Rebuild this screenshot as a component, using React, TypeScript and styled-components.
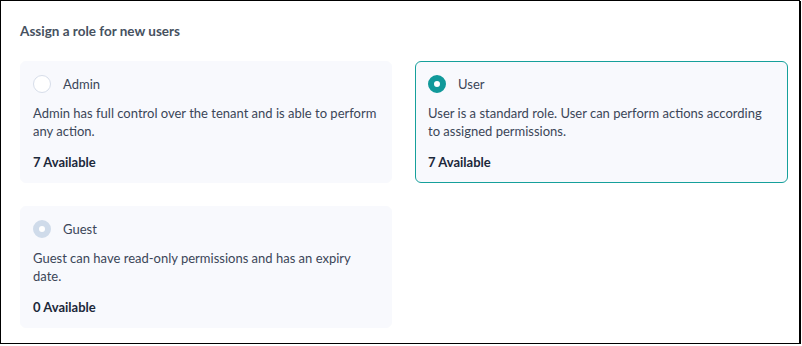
import React, { useState } from 'react';
import styled, { createGlobalStyle } from 'styled-components';

const GlobalStyle = createGlobalStyle`
  html, body {
    margin: 0;
    padding: 0;
    background: #fff;
  }
  body {
    font-family: Lato, "Noto Sans", sans-serif;
  }
`;

const Frame = styled.div`
  box-sizing: border-box;
  width: 800px;
  height: 344px;
  border: 1px solid #000;
  box-shadow: 1px 1px 0 #000;
  padding: 21px 13px 0 19px;
`;

const Heading = styled.div`
  font-size: 13.5px;
  font-weight: 700;
  color: #46515f;
  line-height: 18px;
  margin-bottom: 21px;
`;

const Grid = styled.div`
  display: grid;
  grid-template-columns: 372px 373px;
  column-gap: 23px;
  row-gap: 23px;
`;

const Card = styled.div<{ $selected: boolean }>`
  box-sizing: border-box;
  height: 122px;
  background: #f8f9fd;
  border: 1px solid ${p => (p.$selected ? '#16a09b' : '#f8f9fd')};
  border-radius: 6px;
  padding: 12px 12px 0 12px;
  cursor: pointer;
`;

const Header = styled.div`
  display: flex;
  align-items: center;
  gap: 12px;
  height: 20px;
  margin-bottom: 10px;
`;

const Radio = styled.span<{ $state: 'off' | 'on' | 'disabled' }>`
  box-sizing: border-box;
  width: 18px;
  height: 18px;
  border-radius: 50%;
  flex-shrink: 0;
  background: #fff;
  border: ${p =>
    p.$state === 'on'
      ? '6px solid #11999a'
      : p.$state === 'disabled'
      ? '6px solid #cfdbea'
      : '1px solid #d7deea'};
`;

const Label = styled.span`
  font-size: 13px;
  color: #3b4658;
`;

const Desc = styled.div`
  font-size: 13px;
  line-height: 18px;
  color: #3b4658;
  height: 36px;
  margin-bottom: 14px;
`;

const Count = styled.div`
  font-size: 13px;
  font-weight: 700;
  color: #1c283a;
`;

const roles = [
  { id: 'admin', name: 'Admin', desc: 'Admin has full control over the tenant and is able to perform any action.', count: 7, disabled: false },
  { id: 'user', name: 'User', desc: 'User is a standard role. User can perform actions according to assigned permissions.', count: 7, disabled: false },
  { id: 'guest', name: 'Guest', desc: 'Guest can have read-only permissions and has an expiry date.', count: 0, disabled: true },
];

export default function App() {
  const [selected, setSelected] = useState('user');

  return (
    <>
      <GlobalStyle />
      <Frame>
        <Heading>Assign a role for new users</Heading>
        <Grid>
          {roles.map(r => {
            const state = r.disabled ? 'disabled' : selected === r.id ? 'on' : 'off';
            return (
              <Card key={r.id} $selected={selected === r.id} onClick={() => !r.disabled && setSelected(r.id)}>
                <Header>
                  <Radio $state={state} />
                  <Label>{r.name}</Label>
                </Header>
                <Desc>{r.desc}</Desc>
                <Count>{r.count} Available</Count>
              </Card>
            );
          })}
        </Grid>
      </Frame>
    </>
  );
}
